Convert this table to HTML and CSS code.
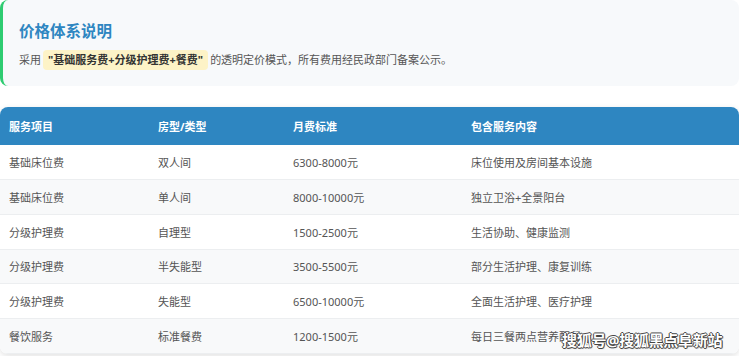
FILE: index.html
```html
<!DOCTYPE html>
<html lang="zh-CN">

<head>
  <meta charset="UTF-8">
  <title>价格体系说明</title>
  <meta name="viewport" content="width=device-width, initial-scale=1.0">
  <link rel="stylesheet" href="styles.css">
</head>

<body>
  <div class="page">
    <!-- INTRO CARD -->
    <section class="intro">
      <h2 class="intro__title">价格体系说明</h2>
      <p class="intro__text">
        采用<span class="mark">"基础服务费+分级护理费+餐费"</span>的透明定价模式，所有费用经民政部门备案公示。
      </p>
    </section>

    <!-- PRICE TABLE -->
    <div class="price">
      <table class="price__table">
        <colgroup>
          <col class="col--item">
          <col class="col--type">
          <col class="col--fee">
          <col>
        </colgroup>
        <thead>
          <tr>
            <th>服务项目</th>
            <th>房型/类型</th>
            <th>月费标准</th>
            <th>包含服务内容</th>
          </tr>
        </thead>
        <tbody>
          <tr>
            <td>基础床位费</td>
            <td>双人间</td>
            <td>6300-8000元</td>
            <td>床位使用及房间基本设施</td>
          </tr>
          <tr>
            <td>基础床位费</td>
            <td>单人间</td>
            <td>8000-10000元</td>
            <td>独立卫浴+全景阳台</td>
          </tr>
          <tr>
            <td>分级护理费</td>
            <td>自理型</td>
            <td>1500-2500元</td>
            <td>生活协助、健康监测</td>
          </tr>
          <tr>
            <td>分级护理费</td>
            <td>半失能型</td>
            <td>3500-5500元</td>
            <td>部分生活护理、康复训练</td>
          </tr>
          <tr>
            <td>分级护理费</td>
            <td>失能型</td>
            <td>6500-10000元</td>
            <td>全面生活护理、医疗护理</td>
          </tr>
          <tr>
            <td>餐饮服务</td>
            <td>标准餐费</td>
            <td>1200-1500元</td>
            <td>每日三餐两点营养配餐</td>
          </tr>
        </tbody>
      </table>
    </div>

    <div class="watermark">搜狐号@搜狐黑点阜新站</div>
  </div>
</body>

</html>
```

FILE: styles.css
```css
:root {
  --fontFamily: "Noto Sans", "Noto Sans CJK SC", sans-serif;
  --blue: #2e86c1;
  --green: #2ecc71;
  --cardBg: #f7f9fb;
  --textColor: #555;
  --strongColor: #333;
  --markBg: #fdf3c7;
  --rowAltBg: #f8f9fa;
  --rowBorder: #eceef0;
  --radius: 8px;
}

* {
  box-sizing: border-box;
}

html,
body {
  margin: 0;
  background: #fff;
}

body {
  font-family: var(--fontFamily);
  color: var(--textColor);
  font-size: 11px;
}

.page {
  position: relative;
  width: 739px;
  height: 356px;
  overflow: hidden;
}

/* intro card */
.intro {
  background-color: var(--cardBg);
  border-left: 3px solid var(--green);
  border-radius: var(--radius);
  padding: 20px 16px 16px;
}

.intro__title {
  margin: 0 0 8px;
  color: var(--blue);
  font-size: 15.5px;
  font-weight: 700;
  line-height: 22px;
}

.intro__text {
  margin: 0;
  font-size: 11px;
  line-height: 20px;
}

.mark {
  display: inline-block;
  margin: 0 2px;
  padding: 0 5px;
  background-color: var(--markBg);
  border-radius: 4px;
  color: var(--strongColor);
  font-weight: 700;
}

/* table */
.price {
  margin-top: 21px;
  border-radius: var(--radius);
  overflow: hidden;
  box-shadow: 0 2px 6px rgba(0, 0, 0, 0.12);
}

.price__table {
  width: 100%;
  border-collapse: collapse;
  table-layout: fixed;
}

.col--item {
  width: 149px;
}

.col--type {
  width: 135px;
}

.col--fee {
  width: 178px;
}

.price__table th,
.price__table td {
  padding: 0 9px;
  text-align: left;
  white-space: nowrap;
}

.price__table th {
  height: 38px;
  background-color: var(--blue);
  color: #fff;
  font-weight: 700;
}

.price__table td {
  height: 34.7px;
  border-bottom: 1px solid var(--rowBorder);
}

.price__table tbody tr:nth-child(even) td {
  background-color: var(--rowAltBg);
}

/* overlay */
.watermark {
  position: absolute;
  left: 562px;
  top: 330px;
  color: #fff;
  font-size: 15px;
  font-weight: 700;
  line-height: 20px;
  letter-spacing: -0.3px;
  text-shadow: 1px 0 0 #444, -1px 0 0 #444, 0 1px 0 #444, 0 -1px 0 #444, 1px 1px 1px rgba(0, 0, 0, 0.4);
}
```
